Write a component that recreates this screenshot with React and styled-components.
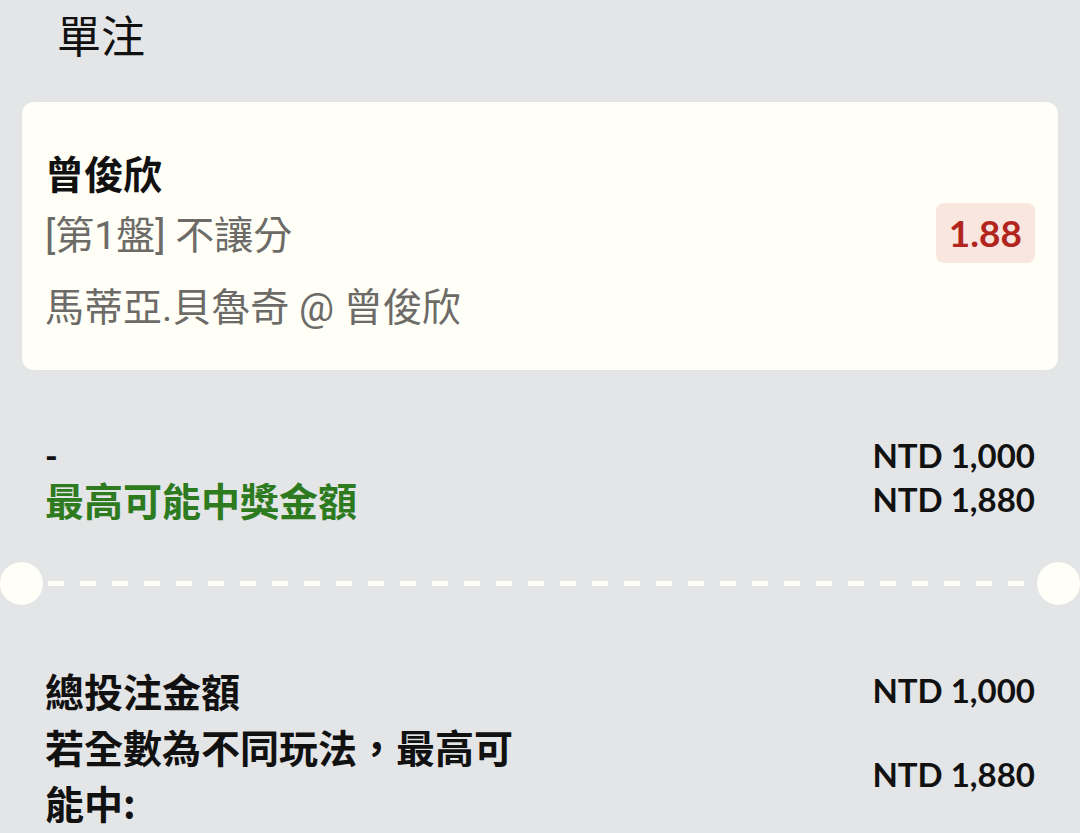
import React from 'react';
import styled, { createGlobalStyle } from 'styled-components';

const GlobalStyle = createGlobalStyle`
  html, body { margin: 0; padding: 0; background: #e4e5e7; }
  body { font-family: "Noto Sans CJK TC", "Noto Sans", sans-serif; color: #111; }
`;

const Page = styled.div`
  width: 1080px;
  height: 833px;
  overflow: hidden;
  background: #e4e5e7;
`;

const Title = styled.h1`
  margin: 0;
  padding-left: 57px;
  font-size: 44px;
  font-weight: 400;
  line-height: 68px;
  color: #111;
`;

const Card = styled.div`
  margin: 34px 22px 0;
  padding: 38px 23px 30px;
  background: #fffef7;
  border-radius: 12px;
  display: flex;
  align-items: center;
  justify-content: space-between;
`;

const Info = styled.div`
  display: flex;
  flex-direction: column;
`;

const Player = styled.div`
  font-size: 39px;
  font-weight: 700;
  line-height: 64px;
  color: #111;
`;

const Line = styled.div`
  font-family: Roboto, "Noto Sans CJK TC", sans-serif;
  font-size: 39px;
  font-weight: 400;
  line-height: 64px;
  color: #6c6b68;
  margin-top: ${({ $gap }) => $gap || 0}px;
`;

const Odds = styled.div`
  font-family: Lato, sans-serif;
  font-size: 37px;
  font-weight: 700;
  color: #b1251d;
  background: #f9e6df;
  border-radius: 8px;
  padding: 8px 13px;
  line-height: 44px;
  margin-bottom: 14px;
`;

const Section = styled.div`
  padding: ${({ $top }) => $top}px 45px 0;
`;

const Row = styled.div`
  display: flex;
  justify-content: space-between;
  align-items: center;
  line-height: ${({ $lh }) => $lh}px;
`;

const Label = styled.div`
  font-size: 39px;
  font-weight: 700;
  color: ${({ $green }) => ($green ? '#2e7b1f' : '#111')};
  max-width: 475px;
`;

const Dash = styled.div`
  font-family: Lato, sans-serif;
  font-size: 34px;
  font-weight: 900;
  color: #111;
`;

const Amount = styled.div`
  font-family: Lato, sans-serif;
  font-size: 33px;
  font-weight: 700;
  color: #111;
  white-space: nowrap;
`;

const Divider = styled.div`
  margin-top: 41px;
  display: flex;
  align-items: center;
  height: 43px;
`;

const Hole = styled.div`
  width: 43px;
  height: 43px;
  border-radius: 50%;
  background: #fffef7;
  flex-shrink: 0;
`;

const DashLine = styled.div`
  flex: 1;
  margin: 0 5px;
  height: 5px;
  background: repeating-linear-gradient(
    to right,
    #fffef7 0,
    #fffef7 16px,
    transparent 16px,
    transparent 32px
  );
`;

export default function App() {
  return (
    <Page>
      <GlobalStyle />
      <Title>單注</Title>
      <Card>
        <Info>
          <Player>曾俊欣</Player>
          <Line>[第1盤] 不讓分</Line>
          <Line $gap={8}>馬蒂亞.貝魯奇 @ 曾俊欣</Line>
        </Info>
        <Odds>1.88</Odds>
      </Card>

      <Section $top={63}>
        <Row $lh={44}>
          <Dash>-</Dash>
          <Amount>NTD 1,000</Amount>
        </Row>
        <Row $lh={44}>
          <Label $green>最高可能中獎金額</Label>
          <Amount>NTD 1,880</Amount>
        </Row>
      </Section>

      <Divider>
        <Hole />
        <DashLine />
        <Hole />
      </Divider>

      <Section $top={57}>
        <Row $lh={56}>
          <Label>總投注金額</Label>
          <Amount>NTD 1,000</Amount>
        </Row>
        <Row $lh={56}>
          <Label>若全數為不同玩法，最高可能中:</Label>
          <Amount>NTD 1,880</Amount>
        </Row>
      </Section>
    </Page>
  );
}
